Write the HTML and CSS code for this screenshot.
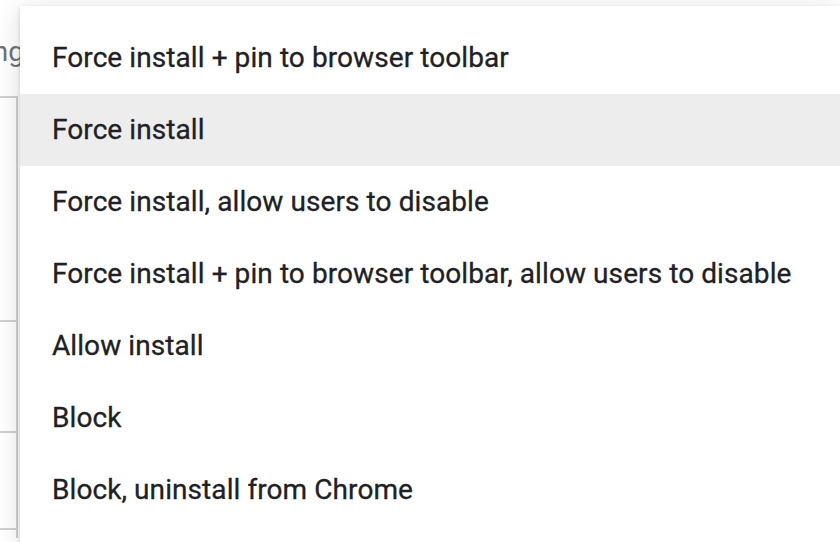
FILE: index.html
```html
<!DOCTYPE html>
<html lang="en">

<head>
    <meta charset="UTF-8">
    <title>Extension install policy</title>
    <link rel="stylesheet" href="styles.css">
</head>

<body>
    <div class="page">
        <div class="setting-label">Installation policy setting</div>
        <div class="table">
            <div class="table-row tall"></div>
            <div class="table-row"></div>
            <div class="table-row short"></div>
            <div class="table-row last"></div>
        </div>
    </div>

    <ul class="menu">
        <li class="menu-item">Force install + pin to browser toolbar</li>
        <li class="menu-item hover">Force install</li>
        <li class="menu-item">Force install, allow users to disable</li>
        <li class="menu-item">Force install + pin to browser toolbar, allow users to disable</li>
        <li class="menu-item">Allow install</li>
        <li class="menu-item">Block</li>
        <li class="menu-item">Block, uninstall from Chrome</li>
    </ul>
</body>

</html>
```

FILE: styles.css
```css
* {
    margin: 0;
    padding: 0;
    box-sizing: border-box;
}

html {
    overflow: hidden;
}

body {
    width: 840px;
    height: 542px;
    overflow: hidden;
    background: #fff;
    font-family: Roboto, "Noto Sans", sans-serif;
    position: relative;
}

.page {
    display: flex;
    flex-direction: column;
    margin-left: -326px;
    padding-top: 32px;
}

.setting-label {
    font-size: 28px;
    color: #6f7276;
    height: 64px;
    line-height: 40px;
    white-space: nowrap;
    width: 350px;
    text-align: right;
    overflow: hidden;
}

.table {
    border-top: 2px solid #d0d0d0;
    width: 344px;
    border-right: 2px solid #d0d0d0;
}

.table-row {
    height: 111px;
    border-bottom: 2px solid #d0d0d0;
}

.table-row.tall {
    height: 224px;
}

.table-row.short {
    height: 97px;
}

.table-row.last {
    height: 8px;
    border-bottom: none;
}

.menu {
    position: absolute;
    left: 20px;
    top: 6px;
    width: 820px;
    height: 536px;
    list-style: none;
    background: #fff;
    padding-top: 16px;
    overflow: hidden;
    box-shadow: 0 2px 4px rgba(0, 0, 0, 0.14), 0 4px 24px rgba(0, 0, 0, 0.14);
}

.menu-item {
    height: 72px;
    line-height: 72px;
    padding-left: 32px;
    font-size: 28px;
    letter-spacing: 0.08px;
    color: #202124;
    -webkit-text-stroke: 0.3px #202124;
    white-space: nowrap;
}

.menu-item.hover {
    background: #ededed;
}
```
